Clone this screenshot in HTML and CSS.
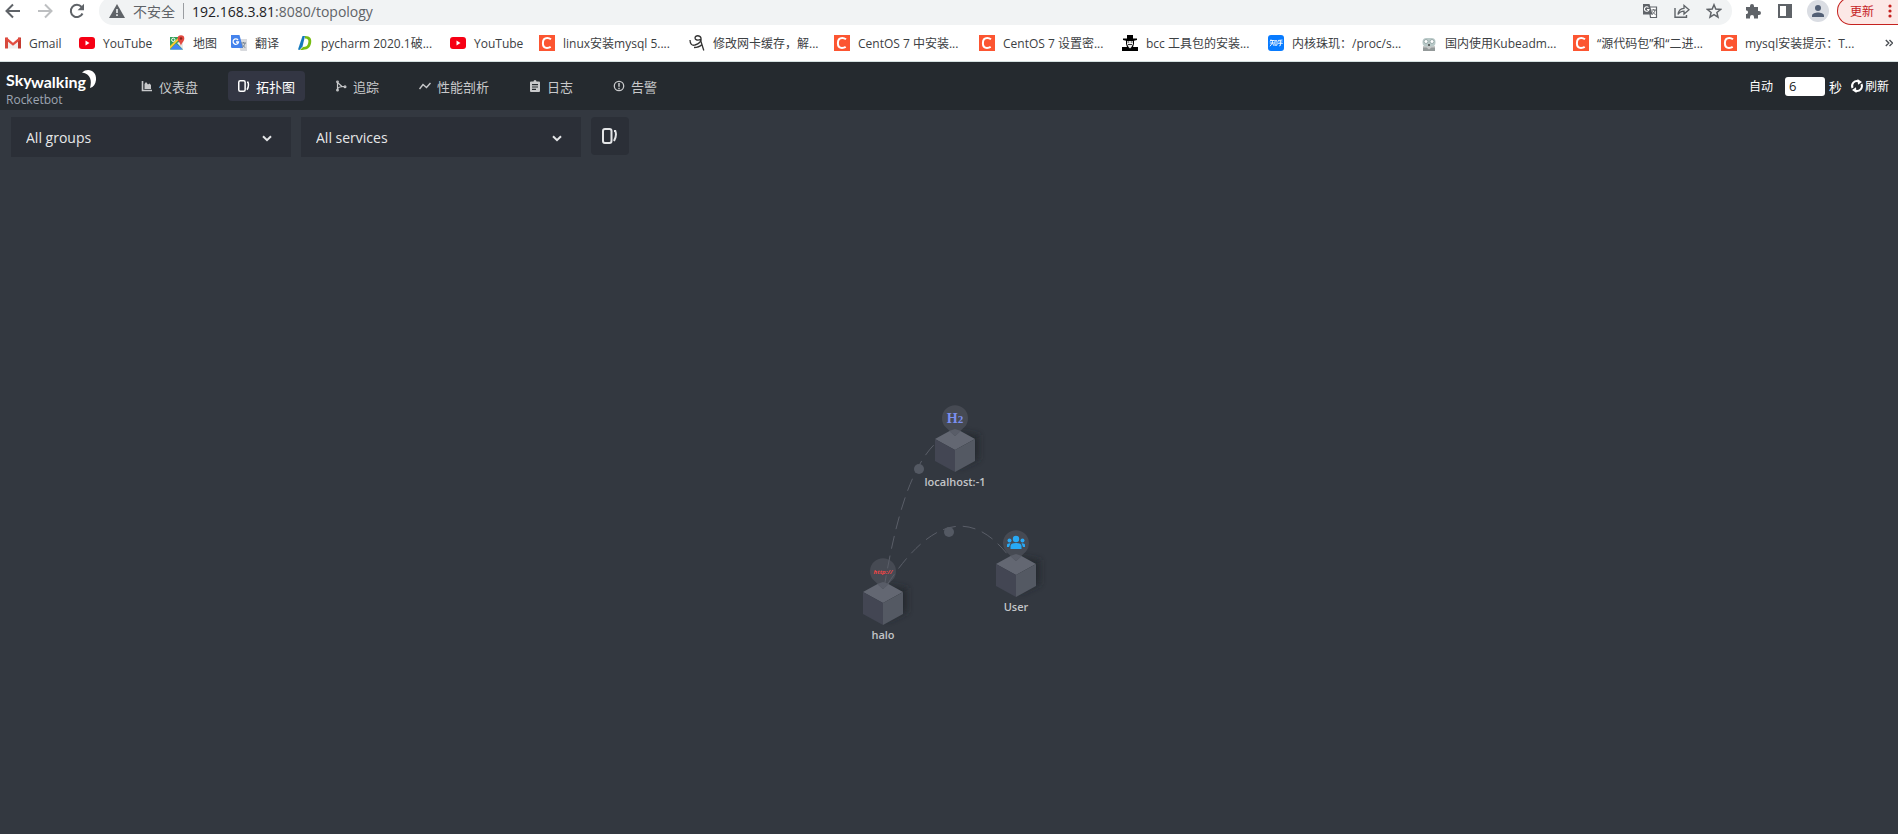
FILE: index.html
```html
<!DOCTYPE html>
<html lang="zh-CN">
<head>
<meta charset="utf-8">
<title>Skywalking Rocketbot</title>
<link rel="stylesheet" href="styles.css">
</head>
<body>
<svg class="defs" aria-hidden="true">
  <symbol id="csdn" viewBox="0 0 16 16"><path fill="#fc5531" d="M0 0h16v16H0z"/><path d="M12 4.300C10.800 3.400 9.600 3 8.300 3 5.300 3 3.900 5.400 3.900 8.200c0 2.900 1.500 4.700 4.100 4.700 1.400 0 2.600-.3 3.700-1" fill="none" stroke="#fff" stroke-width="2"/></symbol>
  <symbol id="youtube" viewBox="0 0 16 16"><rect y="2" width="16" height="12" rx="3" fill="#f60014"/><path d="M6.500 5.500v5L10.500 8z" fill="#fff"/></symbol>
  <symbol id="topo" viewBox="0 0 16 16"><rect x="1" y="1" width="8.500" height="14" rx="2" fill="none" stroke="currentColor" stroke-width="2"/><path d="M12 3h1.300c.9 2.500.5 7-1.300 10" fill="none" stroke="currentColor" stroke-width="2"/></symbol>
</svg>

<header class="browser">
  <div class="toolbar">
    <button class="tool" aria-label="后退"><svg width="16" height="16" viewBox="0 0 16 16"><path d="M15 8H2M8 1.500 1.500 8 8 14.500" fill="none" stroke="#5f6368" stroke-width="2"/></svg></button>
    <button class="tool" aria-label="前进"><svg width="16" height="16" viewBox="0 0 16 16"><path d="M1 8h13M8 1.500 14.500 8 8 14.500" fill="none" stroke="#bdbfc1" stroke-width="2"/></svg></button>
    <button class="tool" aria-label="重新加载"><svg width="16" height="16" viewBox="0 0 16 16"><path d="M13.500 10.500A6.100 6.100 0 1 1 12.600 4" fill="none" stroke="#5f6368" stroke-width="2"/><path d="M15 .8v6.400H8.600z" fill="#5f6368"/></svg></button>
    <div class="omnibox">
      <svg width="16" height="14" viewBox="0 0 16 14"><path d="M8 0 16 14H0z" fill="#5f6368"/><path d="M8 5v4M8 10.300v1.700" stroke="#f1f3f4" stroke-width="1.600"/></svg>
      <span class="insecure">不安全</span>
      <span class="divider"></span>
      <span class="url"><b>192.168.3.81</b>:8080/topology</span>
      <button class="tool" aria-label="翻译此页"><svg width="16" height="16" viewBox="0 0 16 16"><path d="M7 4h7.500v10.500H8.500z" fill="#fff" stroke="#5f6368" stroke-width="1.200"/><path d="M1 1h6.500l3 10.500H1z" fill="#5f6368"/><path d="M6.500 4.500A2.300 2.300 0 1 0 7 6.500H5" fill="none" stroke="#fff" stroke-width="1.100"/><path d="M9.500 7H14M11.700 6v1M13 7c-.3 2-1.500 3.500-3 4.500M10.500 8.500c.8 1.500 1.700 2.300 3 3" fill="none" stroke="#5f6368"/></svg></button>
      <button class="tool" aria-label="分享"><svg width="16" height="16" viewBox="0 0 16 16"><path d="M1 5v9.300h11.500V12" fill="none" stroke="#5f6368" stroke-width="1.400"/><path d="M4 11.500C4.500 7.500 6.500 5.500 10 5.300V2.500L15 6.800 10 11V8.200c-2.700 0-4.500 1-6 3.300z" fill="none" stroke="#5f6368" stroke-width="1.300"/></svg></button>
      <button class="tool" aria-label="添加书签"><svg width="16" height="16" viewBox="0 0 16 16"><path d="m8 1.800 1.800 4.300 4.700.4-3.600 3 1.100 4.600L8 11.700l-4 2.400 1.100-4.600-3.600-3 4.700-.4z" fill="none" stroke="#5f6368" stroke-width="1.500"/></svg></button>
    </div>
    <button class="tool" aria-label="扩展程序"><svg width="16" height="16" viewBox="0 0 16 16"><path d="M1 4h4V3a2 2 0 0 1 4 0v1h4v4h1a2 2 0 0 1 0 4h-1v3.500H9V14a2 2 0 0 0-4 0v1.500H1V11h1a2 2 0 0 0 0-3.500H1z" fill="#5f6368"/></svg></button>
    <button class="tool" aria-label="侧边栏"><svg width="16" height="16" viewBox="0 0 16 16"><path d="M2 2h12v12H2z" fill="none" stroke="#5f6368" stroke-width="2"/><path d="M9 2h5v12H9z" fill="#5f6368"/></svg></button>
    <button class="avatar" aria-label="用户"><svg width="14" height="14" viewBox="0 0 14 14"><circle cx="7" cy="4" r="3" fill="#525f75"/><path d="M1 13v-1.500C1 9.500 4.500 8.500 7 8.500s6 1 6 3V13z" fill="#525f75"/></svg></button>
    <button class="update">更新<svg width="4" height="16" viewBox="0 0 4 16"><g fill="#c5221f"><circle cx="2" cy="3" r="1.600"/><circle cx="2" cy="8" r="1.600"/><circle cx="2" cy="13" r="1.600"/></g></svg></button>
  </div>

  <nav class="bookmarks" aria-label="书签">
    <a href="#"><svg viewBox="0 0 16 16"><path d="M0 2.500h3v11H0z" fill="#d6493d"/><path d="M13 2.500h3v11h-3z" fill="#c33a30"/><path d="M3 6l5 4 5-4v7.500H3z" fill="#f1eeee"/><path d="m1 3.500 7 5.800 7-5.800" fill="none" stroke="#e34c40" stroke-width="2.400"/></svg><span>Gmail</span></a>
    <a href="#"><svg><use href="#youtube"/></svg><span>YouTube</span></a>
    <a href="#"><svg viewBox="0 0 16 16"><path d="M1 2h13v12.500H1z" fill="#34a05a"/><path d="m1 14.500 6-6 7 6z" fill="#4285f4"/><path d="M14 5v9.500L8 8z" fill="#e9e9e9"/><path d="m1 11 9-9h2.500L1 14z" fill="#fbc930"/><circle cx="4.300" cy="4.800" r="1.700" fill="none" stroke="#fff"/><path d="M12 11C11.700 8 8.700 6.500 8.700 3.500a3.300 3.300 0 0 1 6.600 0C15.300 6.500 12.300 8 12 11z" fill="#e2483e"/><circle cx="12" cy="3.500" r="1.200" fill="#86251d"/></svg><span>地图</span></a>
    <a href="#"><svg viewBox="0 0 16 16"><path d="M6 4h10v12H9.500z" fill="#d8dade"/><path d="M0 0h8.500L12 13H1.200Q0 13 0 12z" fill="#4583ec"/><path d="M7 5A2.700 2.700 0 1 0 7.500 7H5" fill="none" stroke="#fff" stroke-width="1.300"/><path d="M10 8h5M12.500 7v1M14 8c-.3 2-1.500 3.500-3 4.500M11.300 9.500c.8 1.500 1.700 2.300 3 3" fill="none" stroke="#748393"/></svg><span>翻译</span></a>
    <a href="#"><svg viewBox="0 0 16 16"><path d="M1 14.500 5.500 1H8L5.500 11.500 2.500 15z" fill="#1479bd"/><path d="M8 1c5.500 0 7 3 6 7.500C13 13 10.500 15 3 15l3-3c3 0 4.500-1 5.200-4C12 5 11 3.700 8 3.500z" fill="#77bd12"/></svg><span>pycharm 2020.1破...</span></a>
    <a href="#"><svg><use href="#youtube"/></svg><span>YouTube</span></a>
    <a href="#"><svg><use href="#csdn"/></svg><span>linux安装mysql 5....</span></a>
    <a href="#"><svg viewBox="0 0 16 16"><g fill="none" stroke="#333" stroke-width="1.300"><path d="M1 5c0 4 2 6 5 5 4-1 7-4 6-7s-6-3-6 0c0 2 3 3 6 1"/><path d="M5 12.500c3 0 6-1 8-3M11.500 5l3.300 10.500"/></g></svg><span>修改网卡缓存，解...</span></a>
    <a href="#"><svg><use href="#csdn"/></svg><span>CentOS 7 中安装...</span></a>
    <a href="#"><svg><use href="#csdn"/></svg><span>CentOS 7 设置密...</span></a>
    <a href="#"><svg viewBox="0 0 16 16"><path d="M4 6h8v5l-2 2H6l-2-2z" fill="#eee"/><path d="M5 0h6v3.500h4V5l-3 .8v3L11 12h5v4H0v-4h5L4 8.800v-3L1 5V3.500h4z"/><path d="M5 6h6v3l-1.500 3L8 13.500 6.500 12 5 9z" fill="#eee"/><path d="M5.500 7h1.700M8.800 7h1.700M6 9.500h4" stroke="#333"/></svg><span>bcc 工具包的安装...</span></a>
    <a href="#"><svg viewBox="0 0 16 16"><rect width="16" height="16" rx="3" fill="#087bff"/><path d="M2.500 5.500h4.200M1.800 8h5M4.400 5.500V8L2 11.200M4.500 8.500l1.800 2.500M3 4.500l-.8 2M7 5.700h2v4.500H7zM10 5.500l4.500-.5M9.800 8.300h5M12.400 5.300v5.200l-1.200.4M10.700 6.300l.4 1M14 6.300l-.4 1" fill="none" stroke="#fff" stroke-width=".9"/></svg><span>内核珠玑：/proc/s...</span></a>
    <a href="#"><svg viewBox="0 0 16 16"><path d="M2 11h12v5H2z" fill="#c7c7c7"/><path d="M2 12.500h3.500l2.500 2 2.500-2H14V16H2z" fill="#939999"/><rect x="1.500" y="3" width="13" height="8.500" rx="4" fill="#b9c9c8"/><circle cx="5" cy="6.500" r="2" fill="#fff" stroke="#9aabab"/><circle cx="11" cy="6.500" r="2" fill="#fff" stroke="#9aabab"/><path d="M7 10h2" stroke="#444" stroke-width="1.500"/></svg><span>国内使用Kubeadm...</span></a>
    <a href="#"><svg><use href="#csdn"/></svg><span>“源代码包”和“二进...</span></a>
    <a href="#"><svg><use href="#csdn"/></svg><span>mysql安装提示：T...</span></a>
    <button class="more" aria-label="更多书签"><svg width="8" height="8" viewBox="0 0 8 8"><path d="m.8 1 3 3-3 3M4.500 1l3 3-3 3" fill="none" stroke="#4b4f54" stroke-width="1.400"/></svg></button>
  </nav>
</header>

<div class="appbar">
  <a class="logo" href="#">
    <svg width="92" height="24" viewBox="0 0 92 24" role="img" aria-label="Skywalking"><text class="brand" y="17">Sky<tspan x="25" dy="2">walking</tspan></text><path d="M76 3.500C82-2 91 2 90 11c-.4 4-2.500 7-6 8 2-7 1-14-8-15.500z" fill="#fff"/></svg>
    <span>Rocketbot</span>
  </a>
  <nav class="menu">
    <a href="#"><svg viewBox="0 0 12 12"><path d="M1.500 1v9.500H11" fill="none" stroke="currentColor" stroke-width="1.600"/><path d="M3.500 9V4l1.500-2 2 2.500 1.500-1L10 5v4z" fill="currentColor"/></svg>仪表盘</a>
    <a class="active" href="#"><svg><use href="#topo"/></svg>拓扑图</a>
    <a href="#"><svg viewBox="0 0 12 12"><g fill="none" stroke="currentColor" stroke-width="1.200"><path d="M2.500 2v8.500M2.500 9C3 7 5 6.500 9 6.500M3 3l4 3.500"/><circle cx="2.500" cy="1.800" r=".8"/><circle cx="2.500" cy="10.200" r=".8"/><circle cx="10" cy="6.700" r=".9"/></g></svg>追踪</a>
    <a href="#"><svg viewBox="0 0 12 12"><path d="M.5 9 4 4.500 7.500 7.500 11.500 3" fill="none" stroke="currentColor" stroke-width="1.400"/></svg>性能剖析</a>
    <a href="#"><svg viewBox="0 0 12 12"><path fill-rule="evenodd" d="M2 1.500h2.500a1.500 1.500 0 0 1 3 0H10q1 0 1 1V11q0 1-1 1H2q-1 0-1-1V2.500q0-1 1-1zM3 4v1.200h6V4zm0 2.400v1.200h6V6.400zm0 2.400V10h4V8.800z" fill="currentColor"/></svg>日志</a>
    <a href="#"><svg viewBox="0 0 12 12"><circle cx="6" cy="6" r="4.700" fill="none" stroke="currentColor" stroke-width="1.300"/><path d="M6 3v3.800M6 7.800v1.400" stroke="currentColor" stroke-width="1.500"/></svg>告警</a>
  </nav>
  <div class="reload">
    <label for="seconds">自动</label>
    <input id="seconds" type="text" value="6">
    <span class="unit">秒</span>
    <button class="refresh"><svg width="14" height="14" viewBox="0 0 14 14"><g fill="none" stroke="#fff" stroke-width="2"><path d="M2.500 9A5 5 0 0 1 8.500 2.200"/><path d="M11.500 5A5 5 0 0 1 5.500 11.800"/></g><path d="M7.500 0 12 3 8 5.800zM6.500 14 2 11l4-2.800z" fill="#fff"/></svg>刷新</button>
  </div>
</div>

<main class="topology">
  <div class="filters">
    <div class="picker">
      <select aria-label="Groups"><option>All groups</option></select>
      <svg width="10" height="7" viewBox="0 0 10 7"><path d="m1 1.200 4 4 4-4" fill="none" stroke="#e4e5e7" stroke-width="2"/></svg>
    </div>
    <div class="picker">
      <select aria-label="Services"><option>All services</option></select>
      <svg width="10" height="7" viewBox="0 0 10 7"><path d="m1 1.200 4 4 4-4" fill="none" stroke="#e4e5e7" stroke-width="2"/></svg>
    </div>
    <button class="toggle" aria-label="Topology"><svg width="16" height="16"><use href="#topo"/></svg></button>
  </div>
  <div class="canvas">
    <svg class="graph" width="220" height="260" viewBox="0 0 220 260">
      <defs>
        <filter id="soft" x="-50%" y="-50%" width="200%" height="200%"><feGaussianBlur stdDeviation="3"/></filter>
        <g id="cube">
          <path d="m3-18 21 3v24l-20 9z" fill="#22252b" opacity=".75" filter="url(#soft)"/>
          <path d="M0-22-20-11 0 0 20-11z" fill="#636772"/>
          <path d="M-20-11v22L0 22V0z" fill="#434653"/>
          <path d="M20-11v22L0 22V0z" fill="#545963"/>
        </g>
        <path id="pin" d="M0 18-10 8.500A13 13 0 1 1 10 8.500z" fill="#464a53"/>
        <path id="tip" d="M-6-20 0-15 6-20 0-22z" fill="#595d68"/>
      </defs>
      <use href="#cube" x="115" y="60"/>
      <use href="#cube" x="176" y="185"/>
      <use href="#cube" x="43" y="213"/>
      <use href="#pin" x="115" y="28"/>
      <use href="#pin" x="176" y="153"/>
      <use href="#pin" x="43" y="181"/>
      <use href="#tip" x="115" y="61"/>
      <use href="#tip" x="176" y="186"/>
      <use href="#tip" x="43" y="214"/>
      <g class="links">
        <path d="M44 198C54 140 68 77 98 51"/>
        <path d="M47 195Q112 95 168 165"/>
      </g>
      <circle cx="79" cy="79" r="5" fill="#545963"/>
      <circle cx="109" cy="142" r="5" fill="#545963"/>
      <text class="h2" x="115" y="33">H<tspan class="two">2</tspan></text>
      <text class="http" x="43" y="184">http://</text>
      <g fill="#28a9f5" transform="translate(176 153)"><circle cy="-4" r="3.200"/><path d="M-5.500 6V3Q-5.500 0 0 0t5.500 3v3z"/><circle cx="-6.500" cy="-2.500" r="2"/><circle cx="6.500" cy="-2.500" r="2"/><path d="M-9 4V2q0-2 3.500-1.800L-7 4zM9 4V2Q9 0 5.500.2L7 4z"/></g>
      <g class="names"><text x="115" y="96">localhost:-1</text><text x="176" y="221">User</text><text x="43" y="249">halo</text></g>
    </svg>
  </div>
</main>
</body>
</html>
```
FILE: styles.css
```css
* { box-sizing: border-box; }
body {
  margin: 0;
  min-height: 100vh;
  display: flex;
  flex-direction: column;
  overflow: hidden;
  background: #333840;
  font-family: "Open Sans", "Noto Sans CJK SC", sans-serif;
  font-size: 12px;
}
button { border: 0; padding: 0; background: none; font: inherit; color: inherit; }
a { color: inherit; text-decoration: none; }
svg { flex: none; display: block; }
.defs { position: absolute; width: 0; height: 0; }

.browser { background: #fff; border-bottom: 1px solid #d5e0e0; }
.toolbar {
  display: flex;
  align-items: center;
  gap: 16px;
  height: 28px;
  margin-top: -3px;
  padding-left: 5px;
}
.tool { width: 16px; height: 16px; }
.omnibox {
  flex: 1;
  display: flex;
  align-items: center;
  gap: 8px;
  height: 28px;
  margin: 0 0 0 -2px;
  padding: 0 10px;
  border-radius: 14px;
  background: #f1f3f4;
  color: #5f6368;
}
.insecure { font-size: 14px; white-space: nowrap; }
.divider { width: 1px; height: 16px; background: #9a9da1; }
.url { flex: 1; font-size: 14px; }
.url b { font-weight: 400; color: #202124; }
.omnibox .tool { margin-left: 8px; }
.browser .tool + .tool { margin-left: 0; }
.omnibox .tool + .tool { margin-left: 8px; }
.omnibox { margin-right: -3px; }
.avatar {
  display: grid;
  place-items: center;
  width: 22px;
  height: 22px;
  margin-left: -2px;
  border-radius: 50%;
  background: #dadde3;
}
.update {
  display: flex;
  align-items: center;
  gap: 14px;
  height: 28px;
  margin-left: -8px;
  padding: 0 6px 0 12px;
  border: 1px solid #c5221f;
  border-right: 0;
  border-radius: 14px 0 0 14px;
  background: #fce8e6;
  color: #c5221f;
}

.bookmarks {
  display: grid;
  grid-template-columns: 74px 90px 62px 66px 153px 89px 150px 145px 145px 143px 146px 153px 152px 148px 150px 1fr;
  align-items: center;
  height: 36px;
  padding: 0 5px;
  color: #3c4043;
}
.bookmarks a { display: flex; align-items: center; gap: 8px; white-space: nowrap; }
.bookmarks a svg { width: 16px; height: 16px; }
.more { justify-self: end; }

.appbar {
  display: flex;
  align-items: center;
  height: 48px;
  padding: 0 9px 0 6px;
  background: #252a2f;
}
.logo { width: 125px; color: #9da5b2; line-height: 14px; padding-top: 4px; }
.logo svg { overflow: visible; }
.brand { font: 700 16px Lato, sans-serif; fill: #fff; }
.menu { display: flex; gap: 20px; color: #c8c9cb; font-size: 13px; }
.menu a { display: flex; align-items: center; gap: 6px; height: 30px; padding: 0 10px; border-radius: 4px; }
.menu svg { width: 12px; height: 12px; }
.menu .active { background: #333643; color: #fff; }
.reload { display: flex; align-items: center; margin-left: auto; color: #fff; }
.reload input {
  width: 40px;
  height: 19px;
  margin: 0 4px 0 12px;
  padding: 0 4px;
  border: 0;
  border-radius: 3px;
  background: #fff;
  color: #222;
  font: inherit;
  font-size: 13px;
}
.unit { font-size: 13px; }
.refresh { display: flex; align-items: center; gap: 1px; margin-left: 8px; }

.topology { flex: 1; display: flex; flex-direction: column; }
.filters { display: flex; gap: 10px; padding: 7px 11px 0; }
.picker { position: relative; width: 280px; height: 40px; }
.picker select {
  appearance: none;
  width: 100%;
  height: 100%;
  padding: 0 15px;
  border: 0;
  border-radius: 0;
  background: #2b2f37;
  color: #e6e7e9;
  font: inherit;
  font-size: 14px;
}
.picker svg { position: absolute; right: 19px; top: 18px; pointer-events: none; }
.toggle {
  display: grid;
  place-items: center;
  width: 38px;
  height: 38px;
  border-radius: 4px;
  background: #2b2f37;
  color: #e4e5e7;
}
.canvas { flex: 1; display: grid; place-items: center; padding-top: 48px; padding-left: 2px; }
.links { fill: none; stroke: #5a5e68; stroke-width: 1; stroke-dasharray: 13 7; }
.names { fill: #c3c5c8; font-size: 11px; font-weight: 600; text-anchor: middle; }
.h2 { fill: #7b8ff0; font: 700 14px "Liberation Serif", serif; text-anchor: middle; }
.two { font-size: 11px; }
.http { fill: #ef4545; font: italic 700 6px "Open Sans", sans-serif; text-anchor: middle; }
```
